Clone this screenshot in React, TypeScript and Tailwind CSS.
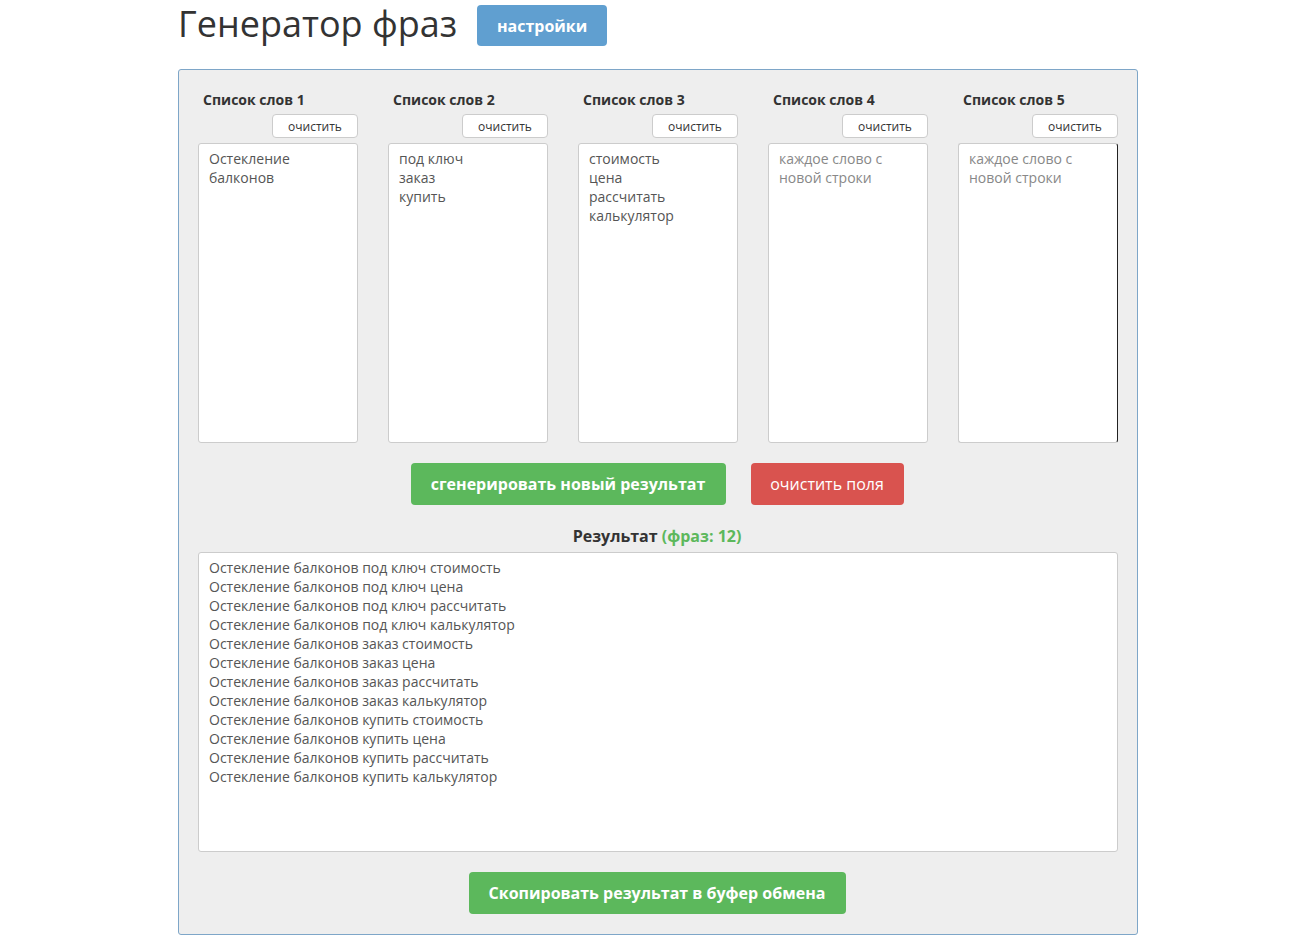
import React from "react";

const lists: string[][] = [
    ["Остекление", "балконов"],
    ["под ключ", "заказ", "купить"],
    ["стоимость", "цена", "рассчитать", "калькулятор"],
    [],
    [],
];

const buildPhrases = (cols: string[][]): string[] => {
    const filled = cols.filter((c) => c.length > 0);
    // first column is one phrase "Остекление балконов"
    const head = [filled[0].join(" ")];
    let out = head;
    for (const col of filled.slice(1)) {
        const next: string[] = [];
        out.forEach((p) => col.forEach((w) => next.push(p + " " + w)));
        out = next;
    }
    return out;
};

export default function App() {
    const phrases = buildPhrases(lists);

    return (
        <div className="min-h-screen bg-white font-['Open_Sans',sans-serif] text-[#333]">
            <div className="w-[960px] ml-[178px]">
                {/* Header */}
                <div className="flex items-center gap-[20px] pt-[5px] h-[46px]">
                    <h1 className="text-[36px] leading-none font-normal text-[#333] -mt-[4px]">Генератор фраз</h1>
                    <button className="h-[41px] w-[130px] rounded-[4px] bg-[#609fd0] text-white font-bold text-[16px]">
                        настройки
                    </button>
                </div>

                {/* Main panel */}
                <div className="mt-[23px] border border-[#7ea6c8] rounded-[3px] bg-[#eeeeee] px-[19px] pt-[20px] pb-[20px]">
                    <div className="grid grid-cols-5 gap-[30px]">
                        {lists.map((words, i) => (
                            <div key={i} className="flex flex-col">
                                <div className="text-[14px] font-bold leading-[20px] pl-[5px]">Список слов {i + 1}</div>
                                <div className="flex justify-end mt-[4px]">
                                    <button className="h-[24px] w-[86px] bg-white border border-[#ccc] rounded-[4px] text-[12px] leading-[24px] text-[#333]">
                                        очистить
                                    </button>
                                </div>
                                <textarea
                                    readOnly
                                    value={words.join("\n")}
                                    placeholder="каждое слово с новой строки"
                                    className={
                                        "mt-[5px] h-[300px] w-full resize-none bg-white border border-[#ccc] rounded-[3px] px-[10px] py-[5px] text-[14px] leading-[19px] text-[#555] placeholder:text-[#888] outline-none " +
                                        (i === 4 ? "border-r-[#222]" : "")
                                    }
                                />
                            </div>
                        ))}
                    </div>

                    <div className="flex justify-center gap-[25px] mt-[20px] pr-[2px]">
                        <button className="h-[42px] w-[315px] rounded-[4px] bg-[#5cb85c] text-white font-bold text-[16px]">
                            сгенерировать новый результат
                        </button>
                        <button className="h-[42px] w-[153px] rounded-[4px] bg-[#d9534f] text-white text-[16px]">
                            очистить поля
                        </button>
                    </div>

                    <div className="text-center mt-[20px] text-[16px] font-bold leading-[22px] pr-[2px]">
                        Результат <span className="text-[#5cb85c]">(фраз: {phrases.length})</span>
                    </div>

                    <textarea
                        readOnly
                        value={phrases.join("\n")}
                        className="mt-[5px] block h-[300px] w-full resize-none bg-white border border-[#ccc] rounded-[3px] px-[10px] py-[5px] text-[14px] leading-[19px] text-[#555] outline-none"
                    />

                    <div className="flex justify-center mt-[20px] pr-[2px]">
                        <button className="h-[42px] w-[377px] rounded-[4px] bg-[#5cb85c] text-white font-bold text-[16px]">
                            Скопировать результат в буфер обмена
                        </button>
                    </div>
                </div>
            </div>
        </div>
    );
}
